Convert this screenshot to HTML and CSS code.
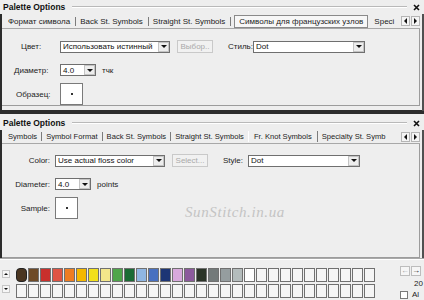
FILE: index.html
```html
<!DOCTYPE html>
<html>
<head>
	<meta charset="UTF-8">
	<title>Palette Options</title>
	<link rel="stylesheet" href="styles.css">
</head>
<body>

<!-- русская версия окна -->
<div class="win win-top">
	<div class="title-row">
		<span class="title">Palette Options</span>
		<span class="title-line"></span>
		<svg class="close" width="7" height="7" viewBox="0 0 7 7"><path d="M1 1L6 6M6 1L1 6" stroke="#111" stroke-width="1.6"/></svg>
	</div>
	<div class="frame">
		<div class="tabs">
			<div class="tab-list">
				<span class="tab">Формат символа</span>
				<span class="tab">Back St. Symbols</span>
				<span class="tab">Straight St. Symbols</span>
				<span class="tab selected">Символы для французских узлов</span>
				<span class="tab tab-last">Speci</span>
			</div>
			<span class="tab-arrows"><span class="arr arr-l"></span><span class="arr arr-r"></span></span>
		</div>
		<div class="panel">
			<div class="row row-first">
				<span class="lbl lbl-ru lbl-color-ru">Цвет:</span>
				<div class="combo combo-color"><span class="combo-text">Использовать истинный</span><span class="drop"></span></div>
				<span class="btn btn-off">Выбор..</span>
				<span class="lbl-style">Стиль:</span>
				<div class="combo combo-style"><span class="combo-text">Dot</span><span class="drop"></span></div>
			</div>
			<div class="row row-diam">
				<span class="lbl lbl-ru">Диаметр:</span>
				<div class="combo combo-diam"><span class="combo-text">4.0</span><span class="drop"></span></div>
				<span class="unit">тчк</span>
			</div>
			<div class="row row-sample">
				<span class="lbl lbl-ru lbl-sample-ru">Образец:</span>
				<div class="sample"><span class="dot"></span></div>
			</div>
		</div>
	</div>
</div>

<!-- английская версия окна -->
<div class="win win-bottom">
	<div class="title-row">
		<span class="title">Palette Options</span>
		<span class="title-line"></span>
		<svg class="close" width="7" height="7" viewBox="0 0 7 7"><path d="M1 1L6 6M6 1L1 6" stroke="#111" stroke-width="1.6"/></svg>
	</div>
	<div class="frame">
		<div class="tabs">
			<div class="tab-list">
				<span class="tab">Symbols</span>
				<span class="tab">Symbol Format</span>
				<span class="tab">Back St. Symbols</span>
				<span class="tab tab-nosep">Straight St. Symbols</span>
				<span class="tab current">Fr. Knot Symbols</span>
				<span class="tab tab-last">Specialty St. Symb</span>
			</div>
			<span class="tab-arrows"><span class="arr arr-l"></span><span class="arr arr-r"></span></span>
		</div>
		<div class="panel">
			<div class="row row-first">
				<span class="lbl">Color:</span>
				<div class="combo combo-color"><span class="combo-text">Use actual floss color</span><span class="drop"></span></div>
				<span class="btn btn-off">Select...</span>
				<span class="lbl-style">Style:</span>
				<div class="combo combo-style"><span class="combo-text">Dot</span><span class="drop"></span></div>
			</div>
			<div class="row row-diam">
				<span class="lbl">Diameter:</span>
				<div class="combo combo-diam"><span class="combo-text">4.0</span><span class="drop"></span></div>
				<span class="unit">points</span>
			</div>
			<div class="row row-sample">
				<span class="lbl">Sample:</span>
				<div class="sample"><span class="dot"></span></div>
			</div>
		</div>
	</div>
</div>

<!-- палитра -->
<div class="palette">
	<div class="scroll"><span class="sbtn sbtn-up"></span><span class="sbtn sbtn-down"></span></div>
	<div class="swatches">
		<div class="sw-row">
			<span class="sw sw-sel" style="background:#4b3621"></span>
			<span class="sw" style="background:#6e4a26"></span>
			<span class="sw" style="background:#c9302c"></span>
			<span class="sw" style="background:#de5444"></span>
			<span class="sw" style="background:#ee7d22"></span>
			<span class="sw" style="background:#f5b800"></span>
			<span class="sw" style="background:#f2e01c"></span>
			<span class="sw" style="background:#f3e68a"></span>
			<span class="sw" style="background:#4fa54a"></span>
			<span class="sw" style="background:#1b6b34"></span>
			<span class="sw" style="background:#8fb6e2"></span>
			<span class="sw" style="background:#4870c0"></span>
			<span class="sw" style="background:#1d3575"></span>
			<span class="sw" style="background:#d8a9dc"></span>
			<span class="sw" style="background:#8c5a9c"></span>
			<span class="sw" style="background:#2b3427"></span>
			<span class="sw" style="background:#737a7a"></span>
			<span class="sw" style="background:#959d9f"></span>
			<span class="sw" style="background:#b4bcbc"></span>
			<span class="sw" style="background:#ffffff"></span>
			<span class="sw"></span><span class="sw"></span><span class="sw"></span><span class="sw"></span><span class="sw"></span>
			<span class="sw"></span><span class="sw"></span><span class="sw"></span><span class="sw"></span><span class="sw"></span>
		</div>
		<div class="sw-row">
			<span class="sw"></span><span class="sw"></span><span class="sw"></span><span class="sw"></span><span class="sw"></span>
			<span class="sw"></span><span class="sw"></span><span class="sw"></span><span class="sw"></span><span class="sw"></span>
			<span class="sw"></span><span class="sw"></span><span class="sw"></span><span class="sw"></span><span class="sw"></span>
			<span class="sw"></span><span class="sw"></span><span class="sw"></span><span class="sw"></span><span class="sw"></span>
			<span class="sw"></span><span class="sw"></span><span class="sw"></span><span class="sw"></span><span class="sw"></span>
			<span class="sw"></span><span class="sw"></span><span class="sw"></span><span class="sw"></span><span class="sw"></span>
		</div>
	</div>
	<div class="pal-side">
		<div class="nav"><span class="nbtn nbtn-off">←</span><span class="nbtn">→</span></div>
		<div class="count">20</div>
		<div class="allrow"><span class="chk"></span>Al</div>
	</div>
</div>

<div class="watermark">SunStitch.in.ua</div>

</body>
</html>
```

FILE: styles.css
```css
html, body {
	margin: 0;
	height: 100%;
	overflow: hidden;
}

body {
	width: 424px;
	position: relative;
	background-color: #ececec;
	font-family: "Liberation Sans", Arial, sans-serif;
	font-size: 8px;
	color: #1c1c1c;
}

/* окна */
.win {
	background-color: #eeeeee;
	display: flex;
	flex-direction: column;
	box-sizing: border-box;
}

.win-top {
	height: 114px;
	border-bottom: 4px solid #2c2c2c;
}

.win-bottom {
	height: 144px;
}

.title-row {
	display: flex;
	align-items: center;
	height: 14px;
	padding: 0 4px 0 3px;
	flex-shrink: 0;
}

.win-bottom .title-row {
	height: 16px;
	padding-top: 2px;
	box-sizing: border-box;
}

.title {
	font-weight: bold;
	font-size: 8.5px;
	color: #111;
}

.title-line {
	flex: 1;
	margin: 0 6px 0 7px;
	border-top: 1px solid #b9b9b9;
	border-bottom: 1px solid #ffffff;
}

.frame {
	flex: 1;
	display: flex;
	flex-direction: column;
	border-left: 2px solid #2c2c2c;
	border-right: 2px solid #505050;
}

/* вкладки */
.tabs {
	display: flex;
	align-items: center;
	height: 14px;
	margin-right: 2px;
	padding-left: 2px;
	border-bottom: 1px solid #a8a8a8;
	flex-shrink: 0;
}

.win-bottom .tabs {
	font-size: 7.6px;
	height: 13px;
}

.tab-list {
	flex: 1;
	display: flex;
	align-items: center;
	overflow: hidden;
	white-space: nowrap;
}

.tab {
	padding: 0 4px;
	line-height: 9px;
	border-right: 1px solid #7c7c7c;
}

.win-top .tab {
	padding: 0 5px 0 4px;
}

.tab.tab-nosep,
.tab.tab-last {
	border-right: none;
}

.win-top .tab.selected {
	border: 1px solid #8a8a8a;
	background-color: #f7f7f7;
	padding: 1px 4px;
	margin-left: 3px;
	margin-right: 2px;
}

.tab.current {
	border-left: 1px solid #ffffff;
	padding: 1px 5px;
}

.tab-arrows {
	display: flex;
	gap: 1px;
	margin-left: 1px;
}

.arr {
	width: 9px;
	height: 10px;
	box-sizing: border-box;
	border: 1px solid #b5b5b5;
	background-color: #f4f4f4;
	display: flex;
	align-items: center;
	justify-content: center;
}

.arr::after {
	content: "";
	border-top: 3px solid transparent;
	border-bottom: 3px solid transparent;
}

.arr-l::after {
	border-right: 3px solid #111;
}

.arr-r::after {
	border-left: 3px solid #111;
}

/* содержимое вкладки */
.panel {
	flex: 1;
	margin-right: 2px;
	border-right: 1px solid #9c9c9c;
	border-bottom: 1px solid #9c9c9c;
	padding-top: 11px;
}

.win-top .panel {
	margin-bottom: 5px;
}

.win-bottom .panel {
	padding-top: 10px;
}

.row {
	display: flex;
	align-items: center;
}

.row-diam {
	margin-top: 11px;
}

.row-sample {
	margin-top: 7px;
}

.lbl {
	width: 48px;
	text-align: right;
	padding-right: 5px;
	flex-shrink: 0;
}

.lbl-ru {
	text-align: left;
	width: 41px;
	padding-left: 12px;
}

.lbl-color-ru {
	padding-left: 19px;
	width: 34px;
}

.lbl-sample-ru {
	padding-left: 14px;
	width: 39px;
}

.combo {
	display: flex;
	align-items: center;
	height: 12px;
	box-sizing: border-box;
	border: 1px solid #6f6f6f;
	background-color: #ffffff;
}

.combo-text {
	flex: 1;
	padding-left: 2px;
	white-space: nowrap;
	overflow: hidden;
	color: #111;
}

.drop {
	width: 11px;
	height: 10px;
	box-sizing: border-box;
	border: 1px solid #c4c4c4;
	background-color: #ededed;
	display: flex;
	align-items: center;
	justify-content: center;
}

.drop::after {
	content: "";
	border-left: 3px solid transparent;
	border-right: 3px solid transparent;
	border-top: 3px solid #111;
}

.combo-color {
	width: 110px;
}

.combo-style {
	width: 112px;
}

.combo-diam {
	width: 36px;
}

.btn {
	width: 36px;
	height: 13px;
	box-sizing: border-box;
	margin-left: 7px;
	border: 1px solid #c9c9c9;
	background-color: #f1f1f1;
	display: flex;
	align-items: center;
	justify-content: center;
}

.btn-off {
	color: #a9a9a9;
}

.lbl-style {
	margin-left: 15px;
	width: 25px;
}

.unit {
	margin-left: 6px;
}

.sample {
	width: 23px;
	height: 22px;
	box-sizing: border-box;
	border: 1px solid #7a7a7a;
	background-color: #ffffff;
	display: flex;
	align-items: center;
	justify-content: center;
}

.dot {
	width: 2px;
	height: 2px;
	background-color: #333;
}

/* палитра снизу */
.palette {
	height: 42px;
	box-sizing: border-box;
	border-top: 1px solid #a9a9a9;
	box-shadow: inset 0 1px 0 #ffffff;
	background-color: #efefef;
	display: flex;
	padding-top: 9px;
}

.scroll {
	width: 14px;
	padding-left: 2px;
	display: flex;
	flex-direction: column;
	gap: 7px;
	padding-top: 2px;
}

.sbtn {
	width: 8px;
	height: 8px;
	box-sizing: border-box;
	border: 1px solid #c6c6c6;
	background-color: #f6f6f6;
	display: flex;
	align-items: center;
	justify-content: center;
}

.sbtn::after {
	content: "";
	border-left: 2px solid transparent;
	border-right: 2px solid transparent;
}

.sbtn-up::after {
	border-bottom: 2px solid #111;
}

.sbtn-down::after {
	border-top: 2px solid #111;
}

.swatches {
	display: flex;
	flex-direction: column;
	gap: 2px;
}

.sw-row {
	display: flex;
	gap: 1px;
}

.sw {
	width: 11px;
	height: 14px;
	box-sizing: border-box;
	border: 1px solid #707070;
	background-color: #f5f5f5;
}

.sw-sel {
	border-radius: 4px;
	border-color: #222;
}

.pal-side {
	margin-left: auto;
	width: 24px;
	margin-top: -2px;
}

.nav {
	display: flex;
	gap: 1px;
}

.nbtn {
	width: 10px;
	height: 10px;
	box-sizing: border-box;
	border: 1px solid #bdbdbd;
	background-color: #f6f6f6;
	font-size: 8px;
	line-height: 8px;
	text-align: center;
	font-weight: bold;
	color: #111;
}

.nbtn-off {
	color: #a0a0a0;
	font-weight: normal;
}

.count {
	text-align: right;
	margin-top: 3px;
	line-height: 9px;
	white-space: nowrap;
	padding-right: 1px;
}

.allrow {
	display: flex;
	align-items: center;
	gap: 4px;
	margin-top: 2px;
	white-space: nowrap;
}

.chk {
	width: 8px;
	height: 8px;
	box-sizing: border-box;
	border: 1px solid #7a7a7a;
	background-color: #ffffff;
}

/* водяной знак */
.watermark {
	position: absolute;
	left: 185px;
	top: 204px;
	font-family: "Liberation Serif", serif;
	font-style: italic;
	font-size: 15px;
	letter-spacing: 0.6px;
	color: #c4c4c4;
}
```
